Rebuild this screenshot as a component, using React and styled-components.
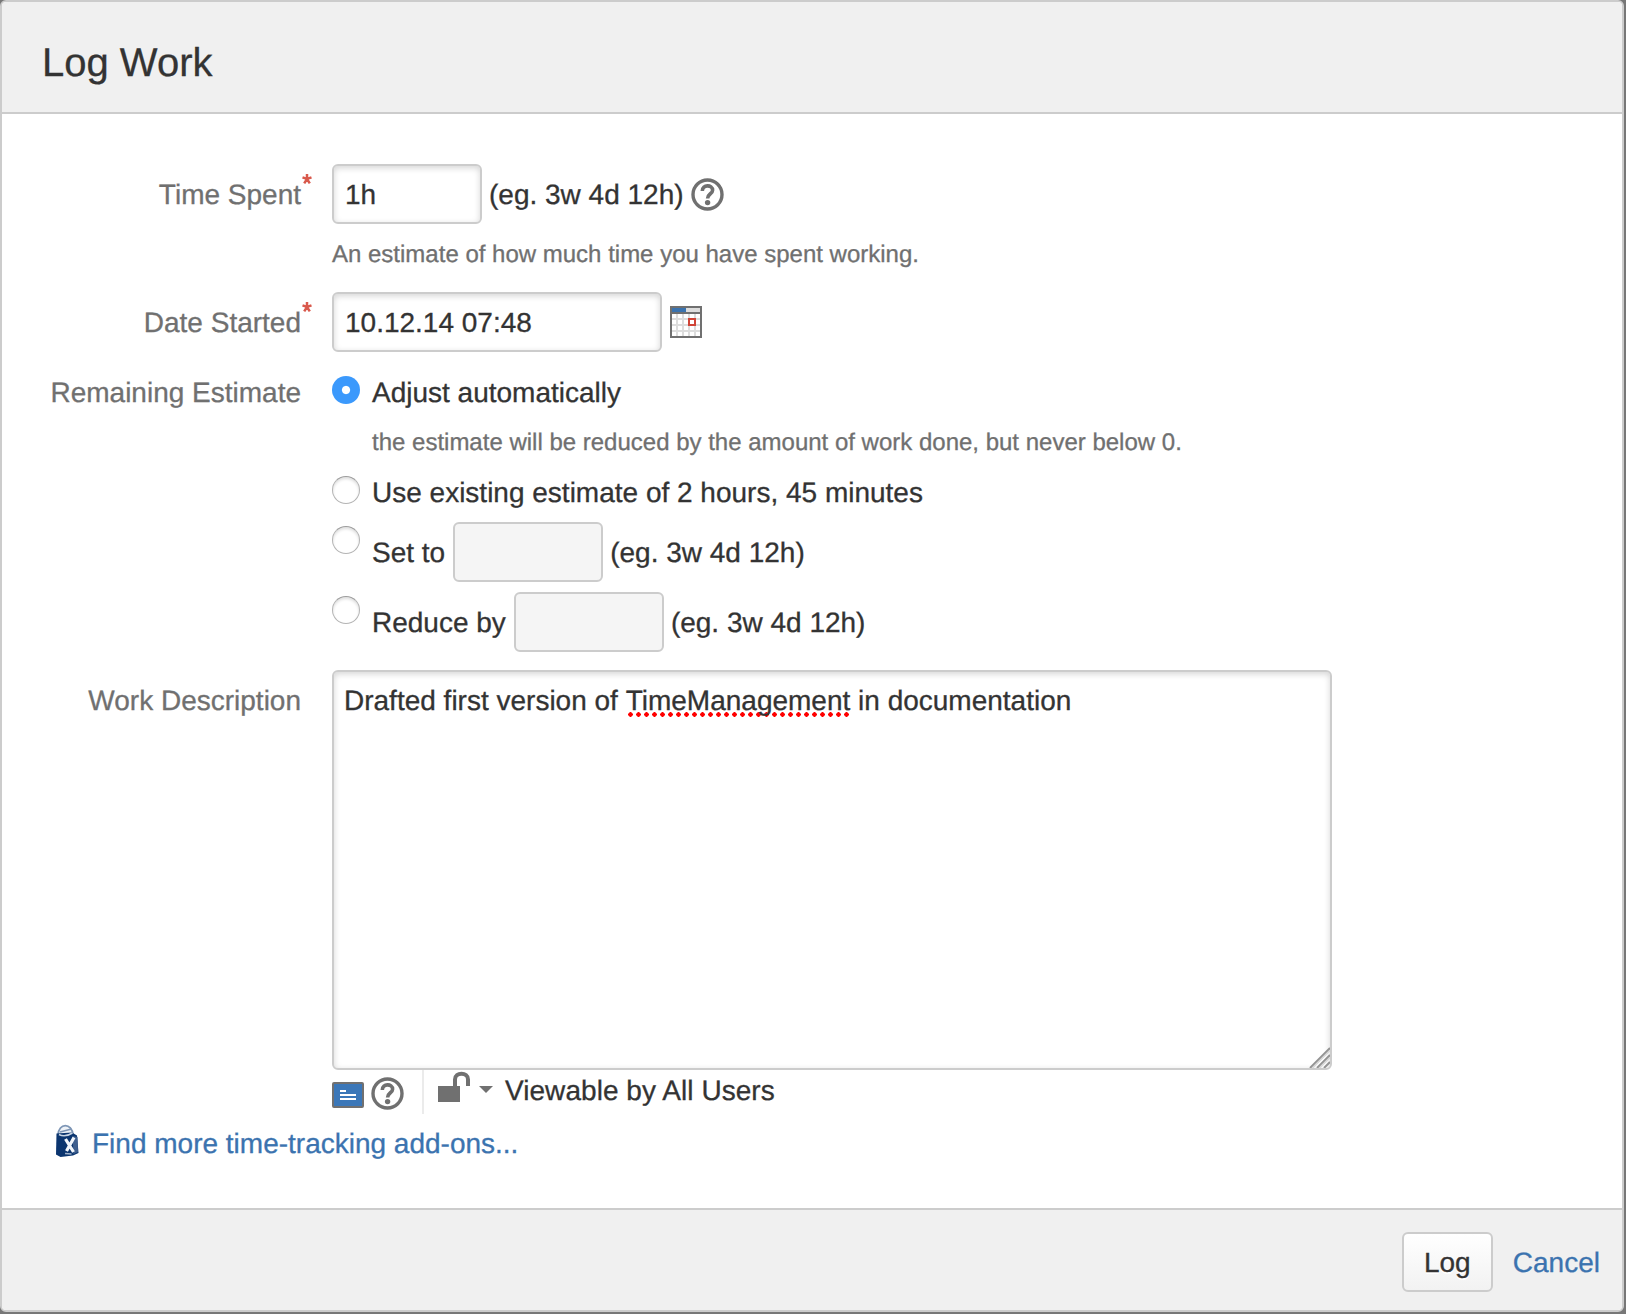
import React from "react";
import styled, { createGlobalStyle } from "styled-components";

const GlobalStyle = createGlobalStyle`
  * { box-sizing: border-box; }
  body {
    margin: 0;
    background: #777;
    color: #333;
    font: 28px/40px Arial, "Liberation Sans", sans-serif;
    text-rendering: geometricPrecision;
    -webkit-text-stroke: 0.3px currentColor;
  }
`;

const Dialog = styled.section`
  display: flex;
  flex-direction: column;
  width: 1624px;
  height: 1312px;
  border: 2px solid #ccc;
  border-radius: 6px;
  background: #fff;
  overflow: hidden;
`;

const Header = styled.header`
  height: 112px;
  padding: 11px 40px 0;
  background: #f0f0f0;
  border-bottom: 2px solid #ccc;
`;

const Title = styled.h2`
  margin: 0;
  font-size: 40px;
  font-weight: 400;
  line-height: 100px;
`;

const Form = styled.form`
  flex: 1;
  padding-top: 50px;
`;

const Field = styled.div`
  display: grid;
  grid-template-columns: 300px 1fr;
  column-gap: 30px;
  margin-bottom: ${(p) => p.$gap}px;
`;

const Label = styled.label`
  position: relative;
  align-self: start;
  padding: 1px 1px 0 0;
  margin-bottom: -1px;
  text-align: right;
  color: #707070;
  line-height: ${(p) => p.$line || 60}px;
`;

const Required = styled.svg`
  position: absolute;
  left: 300px;
  top: 10px;
`;

const Line = styled.div`
  display: flex;
  align-items: center;
  gap: 8px;
  height: 60px;
  white-space: pre;
`;

const Text = styled.span`
  padding-top: 2px;
`;

const Example = styled(Text)`
  margin: 0 -1px;
`;

const TextInput = styled.input`
  width: ${(p) => p.$width || 150}px;
  height: 60px;
  flex: none;
  margin: 0;
  padding: 2px 11px 0;
  border: 2px solid #ccc;
  border-radius: 6px;
  background: #fff;
  color: #333;
  font: inherit;
  box-shadow: inset 0 2px 6px rgba(0, 0, 0, 0.17);
  &:disabled {
    background: #f5f5f5;
    box-shadow: none;
  }
`;

const Hint = styled.div`
  margin: 10px 0 -1px;
  padding-top: 1px;
  color: #707070;
  font-size: 24px;
`;

const Options = styled.div`
  display: flex;
  flex-direction: column;
  gap: 10px;
`;

const Option = styled.div`
  display: flex;
  gap: 12px;
`;

const OptionText = styled.div`
  padding-top: 1px;
  margin-bottom: -1px;
  & > ${Hint} {
    margin-bottom: 0;
    padding-top: 0;
  }
`;

const Radio = styled.input.attrs({ type: "radio", name: "estimate" })`
  appearance: none;
  flex: none;
  width: 28px;
  height: 28px;
  margin: 4px 0 0;
  border: 1px solid #b4b4b4;
  border-top-color: #9c9c9c;
  border-radius: 50%;
  background: #fff;
  box-shadow: inset 0 2px 3px rgba(0, 0, 0, 0.13);
  &:checked {
    border: 0;
    background: radial-gradient(circle at 50% 50%, #fff 3.6px, #3b99fc 4.6px);
    box-shadow: none;
  }
`;

const Editor = styled.div`
  position: relative;
  width: 1000px;
  height: 400px;
  padding: 9px 10px;
  border: 2px solid #ccc;
  border-radius: 6px;
  background: #fff;
  box-shadow: inset 0 2px 6px rgba(0, 0, 0, 0.17);
  outline: 0;
`;

const Misspelled = styled.span`
  display: inline-block;
  height: 40px;
  background: radial-gradient(circle at 2.5px 2.5px, #f00 2px, transparent 2.5px)
    2px 31px / 8px 5px repeat-x;
`;

const Grip = styled.svg`
  position: absolute;
  right: 0;
  bottom: 0;
`;

const Toolbar = styled.div`
  display: flex;
  height: 44px;
`;

const EditorTools = styled.div`
  display: flex;
  align-items: center;
  gap: 7px;
  width: 92px;
  padding-top: 3px;
  border-right: 2px solid #ebebeb;
`;

const Visibility = styled.div`
  display: flex;
  padding: 1px 0 0 14px;
  letter-spacing: 0.05px;
`;

const Addons = styled.div`
  display: flex;
  gap: 13px;
  padding: 1px 0 0 52px;
`;

const Link = styled.a`
  color: #3b73af;
  text-decoration: none;
`;

const Footer = styled.footer`
  display: flex;
  align-items: center;
  justify-content: flex-end;
  gap: 20px;
  height: 102px;
  padding: 4px 22px 0 0;
  background: #f0f0f0;
  border-top: 2px solid #ccc;
  & > ${Link} {
    padding-top: 2px;
  }
`;

const Button = styled.button`
  width: 91px;
  height: 60px;
  padding: 2px 0 0;
  border: 2px solid #ccc;
  border-radius: 6px;
  background: linear-gradient(#fff, #f2f2f2);
  color: #333;
  font: inherit;
  text-shadow: 0 2px 0 #fff;
`;

const Asterisk = () => (
  <Required width="10" height="11" viewBox="0 0 10 11">
    <path d="M5 0V5M0.5 3.4 5 5 9.5 3.4M2.2 9.4 5 5 7.8 9.4" fill="none" stroke="#d9594c" strokeWidth="2.5" />
  </Required>
);

const HelpIcon = () => (
  <svg width="33" height="33" viewBox="0 0 33 33" fill="none" stroke="#707070">
    <circle cx="16.5" cy="16.5" r="14.5" strokeWidth="3.4" />
    <path d="M11.3 13C11.3 6.2 21.6 6.4 21.6 12.2C21.6 15.8 16.6 15.8 16.6 20.4" strokeWidth="3.6" />
    <circle cx="16.6" cy="24.6" r="2.7" fill="#707070" stroke="none" />
  </svg>
);

const CalendarIcon = () => (
  <svg width="32" height="32" viewBox="0 0 32 32" shapeRendering="crispEdges">
    <path fill="#707070" d="M0 0h32v32H0z" />
    <path fill="#3b73af" d="M2 2h14v4H2z" />
    <path fill="#ddd" d="M16 2h14v4H16zM2 8h28v22H2z" />
    <path
      stroke="#fff"
      strokeWidth="4"
      strokeDasharray="4 2"
      d="M2 10h28M2 16h28M2 22h28M2 28h28"
    />
    <path fill="#fff" stroke="#d04437" strokeWidth="2" d="M19 13h6v6h-6z" />
  </svg>
);

const PreviewIcon = () => (
  <svg width="32" height="28" viewBox="0 -2 32 28">
    <rect x="1" y="1" width="30" height="24" rx="1" fill="#3b77b8" stroke="#707070" strokeWidth="2" />
    <path d="M8 9h6M8 13h16M8 17h16" stroke="#fff" strokeWidth="2" />
  </svg>
);

const LockIcon = () => (
  <svg width="32" height="43" viewBox="0 1 32 43">
    <path d="M0 16h22v16H0z" fill="#707070" />
    <path d="M17 17V9.5C17 1.8 30 1.8 30 9.5V16" fill="none" stroke="#707070" strokeWidth="4" />
  </svg>
);

const CaretIcon = () => (
  <svg width="35" height="43" viewBox="0 1 35 43">
    <path d="M9 16h14l-7 7z" fill="#707070" />
  </svg>
);

const BagIcon = () => (
  <svg width="25" height="36" viewBox="0.5 1 25 36">
    <path d="M4.5 12C5 -0.5 18.5 -0.5 19.5 12" fill="#eef2f7" stroke="#7d95b5" strokeWidth="1.8" />
    <path d="M6.5 9 18 6" stroke="#7d95b5" strokeWidth="1.6" />
    <path d="M3 10.5 18.5 9.5 23.5 12.5 25 30 19.5 32.5 7 34 2.5 31.5Z" fill="#0b356f" />
    <path d="M19 13 24 14 24.5 29 20 31Z" fill="#3f5f8e" />
    <path d="M5.5 11.5C10 14 15 12.5 19 10" fill="none" stroke="#c9d5e4" strokeWidth="1.5" />
    <path d="M12 16 20 29M20.5 14.5 13 28" stroke="#f2f6fb" strokeWidth="3.2" />
    <path d="M11.5 30.5 18 31" stroke="#9eb1ca" strokeWidth="1.4" />
  </svg>
);

const GripIcon = () => (
  <Grip width="22" height="22" viewBox="0 0 22 22" stroke="#949494" strokeWidth="2">
    <path d="M2 22 22 2M9 22 22 9M16 22 22 16" />
    <path d="M4.5 22 22 4.5M11.5 22 22 11.5" stroke="#d5d5d5" strokeWidth="1.5" />
  </Grip>
);

export default function App() {
  return (
    <>
      <GlobalStyle />
      <Dialog>
        <Header>
          <Title>Log Work</Title>
        </Header>
        <Form>
          <Field $gap={18}>
            <Label>
              Time Spent
              <Asterisk />
            </Label>
            <div>
              <Line>
                <TextInput defaultValue="1h" />
                <Example>(eg. 3w 4d 12h)</Example>
                <HelpIcon />
              </Line>
              <Hint>An estimate of how much time you have spent working.</Hint>
            </div>
          </Field>
          <Field $gap={20}>
            <Label>
              Date Started
              <Asterisk />
            </Label>
            <Line>
              <TextInput $width={330} defaultValue="10.12.14 07:48" />
              <CalendarIcon />
            </Line>
          </Field>
          <Field $gap={18}>
            <Label $line={40}>Remaining Estimate</Label>
            <Options>
              <Option>
                <Radio defaultChecked />
                <OptionText>
                  Adjust automatically
                  <Hint>the estimate will be reduced by the amount of work done, but never below 0.</Hint>
                </OptionText>
              </Option>
              <Option>
                <Radio />
                <OptionText>Use existing estimate of 2 hours, 45 minutes</OptionText>
              </Option>
              <Option>
                <Radio />
                <Line>
                  <Text>Set to</Text>
                  <TextInput disabled />
                  <Example>(eg. 3w 4d 12h)</Example>
                </Line>
              </Option>
              <Option>
                <Radio />
                <Line>
                  <Text>Reduce by</Text>
                  <TextInput disabled />
                  <Example>(eg. 3w 4d 12h)</Example>
                </Line>
              </Option>
            </Options>
          </Field>
          <Field $gap={9}>
            <Label>Work Description</Label>
            <div>
              <Editor role="textbox">
                Drafted first version of <Misspelled>TimeManagement</Misspelled> in documentation
                <GripIcon />
              </Editor>
              <Toolbar>
                <EditorTools>
                  <PreviewIcon />
                  <HelpIcon />
                </EditorTools>
                <Visibility>
                  <LockIcon />
                  <CaretIcon />
                  <span>Viewable by All Users</span>
                </Visibility>
              </Toolbar>
            </div>
          </Field>
          <Addons>
            <BagIcon />
            <Link href="#">Find more time-tracking add-ons...</Link>
          </Addons>
        </Form>
        <Footer>
          <Button type="button">Log</Button>
          <Link href="#">Cancel</Link>
        </Footer>
      </Dialog>
    </>
  );
}
